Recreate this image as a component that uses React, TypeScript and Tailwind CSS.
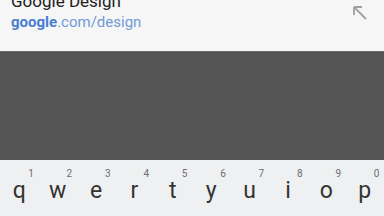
const keys = [
  { l: 'q', d: '1' },
  { l: 'w', d: '2' },
  { l: 'e', d: '3' },
  { l: 'r', d: '4' },
  { l: 't', d: '5' },
  { l: 'y', d: '6' },
  { l: 'u', d: '7' },
  { l: 'i', d: '8' },
  { l: 'o', d: '9' },
  { l: 'p', d: '0' },
];

function ArrowUpLeft() {
  return (
    <svg width="16" height="16" viewBox="0 0 16 16" fill="none">
      <path d="M2 2 L14 14" stroke="#a0a0a0" strokeWidth="1.8" />
      <path d="M2 2 L10 2 M2 2 L2 10" stroke="#a0a0a0" strokeWidth="1.8" />
    </svg>
  );
}

export default function App() {
  return (
    <div className="w-[384px] h-[216px] flex flex-col overflow-hidden font-['Roboto',sans-serif]">
      {/* suggestion row, title is scrolled partly off the top */}
      <div className="h-[51px] bg-[#f6f6f6] flex justify-between px-[11px] overflow-hidden">
        <div className="flex flex-col">
          <div className="-mt-[9px] text-[17px] leading-[20px] text-[#212121]">Google Design</div>
          <div className="mt-[1px] text-[15px] leading-[20px] text-[#6f9bd6]">
            <span className="font-bold text-[#4a7fd0]">google</span>.com/design
          </div>
        </div>
        <div className="pt-[5px] pr-[5px]">
          <ArrowUpLeft />
        </div>
      </div>
      {/* dark area */}
      <div className="h-[109px] bg-[#545454] border-t border-[#6a6a6a]" />
      {/* keyboard */}
      <div className="flex-1 bg-[#eef0f2] grid grid-cols-10 pt-[5px]">
        {keys.map((k) => (
          <div key={k.l} className="relative flex justify-center">
            <span className="absolute left-[calc(50%+9px)] top-[3px] text-[10px] leading-[12px] text-[#6e6e6e]">{k.d}</span>
            <span className="mt-[12px] text-[23px] leading-[28px] text-[#333333]">{k.l}</span>
          </div>
        ))}
      </div>
    </div>
  );
}
